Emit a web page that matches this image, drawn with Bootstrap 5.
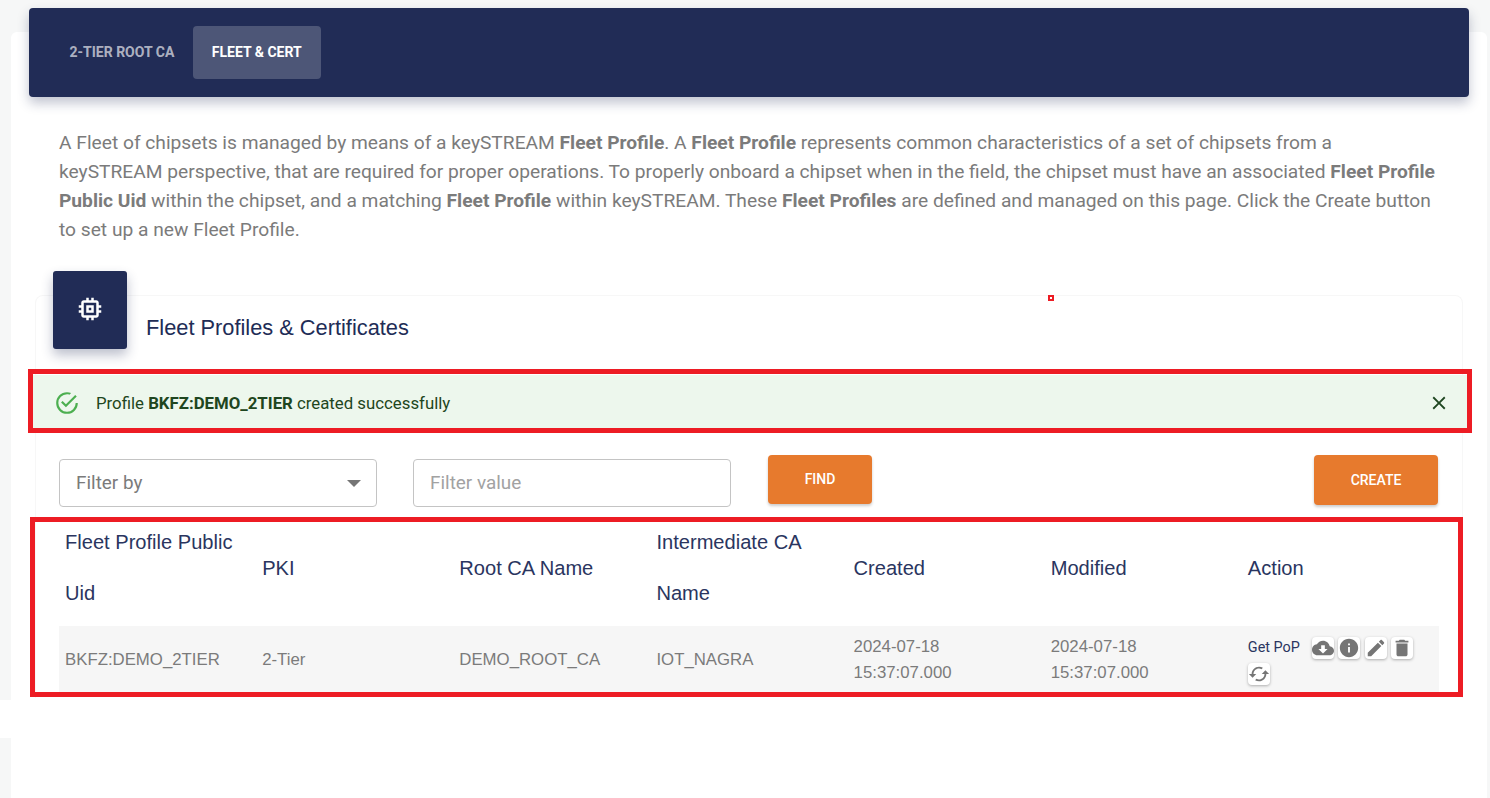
<!DOCTYPE html>
<html lang="en">
<head>
  <meta charset="UTF-8" />
  <meta name="viewport" content="width=device-width, initial-scale=1.0" />
  <title>Fleet Profiles &amp; Certificates</title>
  <link href="https://cdn.jsdelivr.net/npm/bootstrap@5.3.0/dist/css/bootstrap.min.css" rel="stylesheet">
  <style>
    html, body { height: 100%; overflow: hidden; }
    body {
      background-color: #f6f7f7;
      font-family: Roboto, "Liberation Sans", sans-serif;
      color: #7b7b7b;
    }
    .page-panel {
      position: relative;
      margin: 32px 3px 0 11px;
      height: 766px;
      padding: 0 18px;
      background: #fff;
      border-radius: 6px 6px 0 0;
    }
    .top-bar {
      position: relative;
      top: -24px;
      height: 89px;
      padding: 18px 22px;
      background: #212c56;
      border-radius: 4px;
      box-shadow: 0 6px 12px rgba(33, 44, 86, .28);
    }
    .tab-link {
      display: flex;
      align-items: center;
      height: 53px;
      padding: 0 18.5px;
      font-size: 14px;
      font-weight: 700;
      text-transform: uppercase;
      color: rgba(255, 255, 255, .65);
      text-decoration: none;
      border-radius: 4px;
    }
    .tab-link.is-on { padding: 0 19px; background: rgba(255, 255, 255, .2); color: #fff; }
    .intro-text {
      margin: 7px 0 0;
      padding: 0 30px;
      font-size: 19.2px;
      line-height: 29px;
    }
    .intro-text b { font-weight: 700; }
    .fleet-card {
      position: relative;
      margin: 51px 6px 0;
      height: 403px;
      background: #fff;
      border: 1px solid #f7f7f7;
      border-bottom: 0;
      border-radius: 8px 8px 0 0;
    }
    .head-icon {
      position: absolute;
      left: 17px;
      top: -25px;
      width: 74px;
      height: 78px;
      padding-bottom: 3px;
      background: #212c56;
      color: #fff;
      border-radius: 3px;
      box-shadow: 0 6px 12px rgba(33, 44, 86, .3);
    }
    .head-title {
      margin: 0;
      padding: 18px 0 0 110px;
      height: 79px;
      font-family: "Liberation Sans", Arial, sans-serif;
      font-size: 21.8px;
      font-weight: 400;
      line-height: 28px;
      color: #212c56;
    }
    .ok-alert {
      height: 53px;
      margin: 0 -5px 0 -3px;
      padding: 2px 17px 0 21px;
      background: #edf7ed;
      color: #1e4620;
      font-size: 16.8px;
    }
    .ok-alert span { padding-top: 2px; }
    .ok-alert b { font-weight: 700; }
    .filter-row {
      height: 82px;
      padding: 27px 24px 0 23px;
    }
    .filter-box {
      height: 48px;
      margin-top: 4px;
      font-size: 18.9px;
      color: #7b7b7b;
      border: 1px solid #c4c4c4;
      border-radius: 4px;
      padding: 0 16px;
    }
    .filter-one { width: 318px; margin-right: 36px; }
    .filter-two { width: 318px; margin-right: 37px; color: #a2a2a2; }
    .caret-down {
      width: 0;
      height: 0;
      border-left: 7px solid transparent;
      border-right: 7px solid transparent;
      border-top: 7px solid #757575;
      margin-right: -1px;
    }
    .act-btn {
      height: 49px;
      background: #e77a2d;
      color: #fff;
      font-size: 14px;
      font-weight: 500;
      text-transform: uppercase;
      border: 0;
      border-radius: 4px;
      box-shadow: 0 2px 3px rgba(0, 0, 0, .2);
    }
    .btn-find { width: 104px; }
    .btn-create { width: 124px; height: 50px; }
    .fleet-table {
      width: 1380px;
      margin: 0 23px;
      table-layout: fixed;
      border-collapse: collapse;
      font-family: "Liberation Sans", Arial, sans-serif;
    }
    .fleet-table th {
      height: 116px;
      padding: 0 6px;
      font-size: 20.1px;
      font-weight: 400;
      line-height: 51px;
      color: #2a3560;
      vertical-align: middle;
    }
    .fleet-table td {
      height: 67px;
      padding: 0 6px;
      background: #f6f6f6;
      font-size: 16.8px;
      line-height: 26px;
      color: #7b7b7b;
      vertical-align: middle;
    }
    .fleet-table td.act-cell {
      font-family: Roboto, "Liberation Sans", sans-serif;
      line-height: 25px;
    }
    .get-pop { font-size: 14.4px; color: #2a3560; margin-right: 12px; }
    .mini-btn {
      display: inline-flex;
      align-items: center;
      justify-content: center;
      width: 22px;
      height: 22px;
      padding: 0;
      margin-right: 4.5px;
      border: 0;
      border-radius: 4px;
      background: #fff;
      color: #757575;
      vertical-align: middle;
      box-shadow: 0 1px 3px rgba(0, 0, 0, .3);
    }
    .red-mark {
      position: absolute;
      border: 5px solid #ed1c24;
      pointer-events: none;
    }
    .mark-alert { left: 17px; top: 337px; width: 1444px; height: 64px; }
    .mark-table { left: 19px; top: 485px; width: 1433px; height: 180px; }
    .mark-dot { left: 1037px; top: 263px; width: 6px; height: 6px; border-width: 2px; }
    .edge-wipe {
      position: absolute;
      left: -11px;
      top: 668px;
      width: 11px;
      height: 38px;
      background: #fff;
    }
  </style>
</head>
<body>
  <div class="page-panel">
    <nav class="top-bar d-flex">
      <a class="tab-link" href="#">2-Tier Root CA</a>
      <a class="tab-link is-on" href="#">Fleet &amp; Cert</a>
    </nav>

    <p class="intro-text">A Fleet of chipsets is managed by means of a keySTREAM <b>Fleet Profile</b>. A <b>Fleet Profile</b> represents common characteristics of a set of chipsets from a keySTREAM perspective, that are required for proper operations. To properly onboard a chipset when in the field, the chipset must have an associated <b>Fleet Profile Public Uid</b> within the chipset, and a matching <b>Fleet Profile</b> within keySTREAM. These <b>Fleet Profiles</b> are defined and managed on this page. Click the Create button to set up a new Fleet Profile.</p>

    <div class="fleet-card">
      <div class="head-icon d-flex align-items-center justify-content-center">
        <svg width="30" height="30" viewBox="0 0 24 24" fill="currentColor"><path d="M15 9H9v6h6V9zm-2 4h-2v-2h2v2zm8-2V9h-2V7c0-1.100-.9-2-2-2h-2V3h-2v2h-2V3H9v2H7c-1.100 0-2 .9-2 2v2H3v2h2v2H3v2h2v2c0 1.100.9 2 2 2h2v2h2v-2h2v2h2v-2h2c1.100 0 2-.9 2-2v-2h2v-2h-2v-2h2zm-4 6H7V7h10v10z"/></svg>
      </div>
      <h5 class="head-title">Fleet Profiles &amp; Certificates</h5>

      <div class="ok-alert d-flex align-items-center">
        <svg class="me-3" width="26" height="26" viewBox="0 0 24 24" fill="#4caf50"><path d="M20,12A8,8 0 0,1 12,20A8,8 0 0,1 4,12A8,8 0 0,1 12,4C12.76,4 13.5,4.110 14.2,4.310L15.77,2.740C14.61,2.260 13.34,2 12,2A10,10 0 0,0 2,12A10,10 0 0,0 12,22A10,10 0 0,0 22,12M7.910,10.080L6.500,11.500L11,16L21,6L19.590,4.580L11,13.170L7.910,10.080Z"/></svg>
        <span>Profile <b>BKFZ:DEMO_2TIER</b> created successfully</span>
        <svg class="ms-auto" width="22" height="22" viewBox="0 0 24 24" fill="currentColor"><path d="M19 6.410L17.590 5 12 10.590 6.410 5 5 6.410 10.590 12 5 17.590 6.410 19 12 13.410 17.590 19 19 17.590 13.410 12 19 6.410z"/></svg>
      </div>

      <div class="filter-row d-flex align-items-start">
        <div class="filter-box filter-one d-flex align-items-center justify-content-between">
          <span>Filter by</span><span class="caret-down"></span>
        </div>
        <div class="filter-box filter-two d-flex align-items-center">Filter value</div>
        <button class="act-btn btn-find" type="button">Find</button>
        <button class="act-btn btn-create ms-auto" type="button">Create</button>
      </div>

      <table class="fleet-table">
        <thead>
          <tr>
            <th>Fleet Profile Public Uid</th>
            <th>PKI</th>
            <th>Root CA Name</th>
            <th>Intermediate CA Name</th>
            <th>Created</th>
            <th>Modified</th>
            <th>Action</th>
          </tr>
        </thead>
        <tbody>
          <tr>
            <td>BKFZ:DEMO_2TIER</td>
            <td>2-Tier</td>
            <td>DEMO_ROOT_CA</td>
            <td>IOT_NAGRA</td>
            <td>2024-07-18 15:37:07.000</td>
            <td>2024-07-18 15:37:07.000</td>
            <td class="act-cell">
              <span class="get-pop">Get PoP</span><button class="mini-btn" type="button"><svg width="22" height="22" viewBox="0 0 24 24" fill="currentColor"><path d="M19.350 10.040C18.670 6.590 15.640 4 12 4 9.110 4 6.600 5.640 5.350 8.040 2.340 8.360 0 10.910 0 14c0 3.310 2.690 6 6 6h13c2.760 0 5-2.240 5-5 0-2.640-2.050-4.780-4.650-4.960zM17 13l-5 5-5-5h3V9h4v4h3z"/></svg></button><button class="mini-btn" type="button"><svg width="22" height="22" viewBox="0 0 24 24" fill="currentColor"><path d="M12 2C6.480 2 2 6.480 2 12s4.480 10 10 10 10-4.480 10-10S17.520 2 12 2zm1 15h-2v-6h2v6zm0-8h-2V7h2v2z"/></svg></button><button class="mini-btn" type="button"><svg width="22" height="22" viewBox="0 0 24 24" fill="currentColor"><path d="M3 17.250V21h3.750L17.810 9.940l-3.750-3.750L3 17.250zM20.710 7.040c.39-.39.39-1.020 0-1.410l-2.340-2.340c-.39-.39-1.020-.39-1.410 0l-1.830 1.830 3.750 3.750 1.830-1.830z"/></svg></button><button class="mini-btn" type="button"><svg width="22" height="22" viewBox="0 0 24 24" fill="currentColor"><path d="M6 19c0 1.100.9 2 2 2h8c1.100 0 2-.9 2-2V7H6v12zM19 4h-3.500l-1-1h-5l-1 1H5v2h14V4z"/></svg></button><button class="mini-btn" type="button"><svg width="22" height="22" viewBox="0 0 24 24" fill="currentColor"><path d="M19 8l-4 4h3c0 3.310-2.690 6-6 6-1.010 0-1.970-.25-2.800-.7l-1.460 1.460C8.970 19.540 10.430 20 12 20c4.420 0 8-3.580 8-8h3l-4-4zM6 12c0-3.310 2.690-6 6-6 1.010 0 1.970.25 2.800.7l1.460-1.460C15.030 4.460 13.570 4 12 4c-4.420 0-8 3.580-8 8H1l4 4 4-4H6z"/></svg></button>
            </td>
          </tr>
        </tbody>
      </table>
    </div>

    <div class="red-mark mark-dot"></div>
    <div class="red-mark mark-alert"></div>
    <div class="red-mark mark-table"></div>
    <div class="edge-wipe"></div>
  </div>
  <script src="https://cdn.jsdelivr.net/npm/bootstrap@5.3.0/dist/js/bootstrap.bundle.min.js"></script>
</body>
</html>
